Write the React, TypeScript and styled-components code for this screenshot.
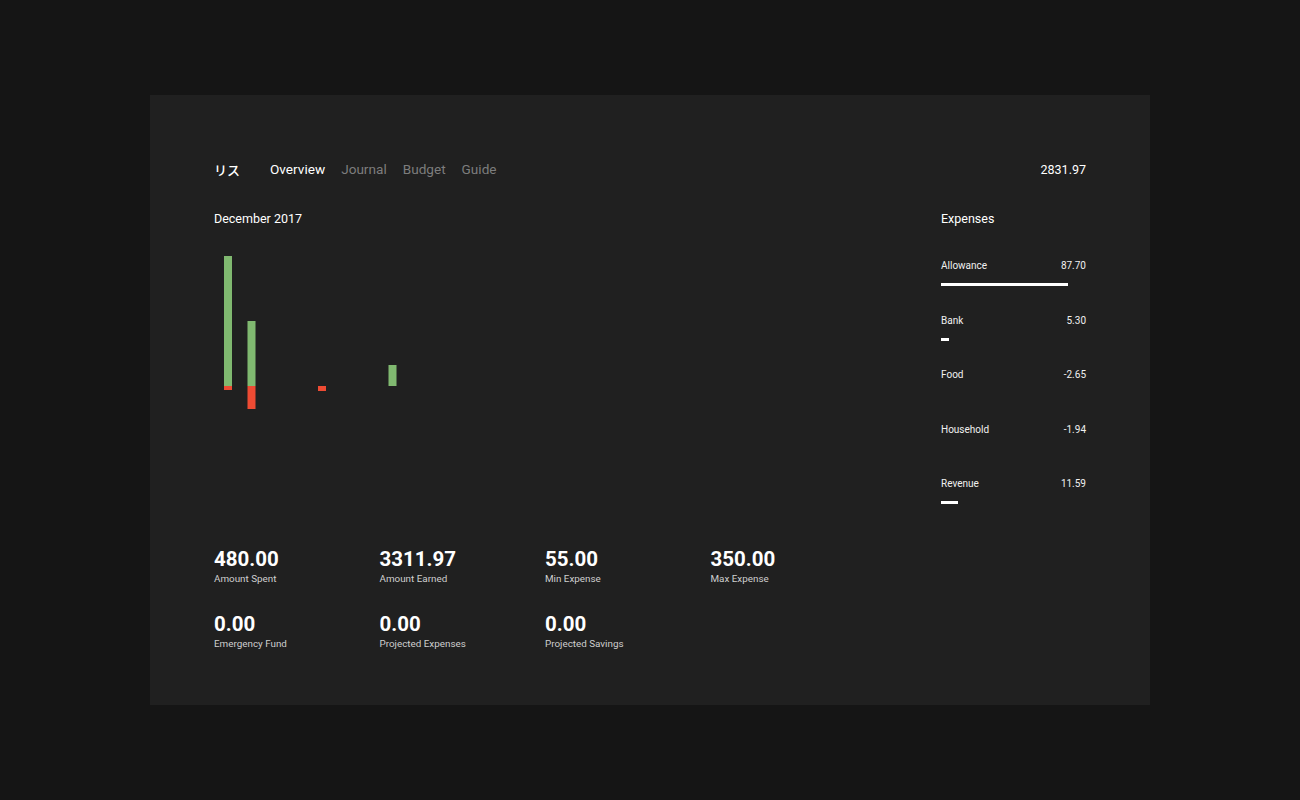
import React from "react";
import styled, { createGlobalStyle } from "styled-components";

const Global = createGlobalStyle`
  html, body { margin: 0; padding: 0; background: #151515; }
  body { font-family: Roboto, "Noto Sans CJK JP", sans-serif; color: #eee; }
`;

const Page = styled.div`
  min-height: 100vh;
  display: flex;
  align-items: center;
  justify-content: center;
`;

const Card = styled.div`
  width: 1000px;
  box-sizing: border-box;
  background: #202020;
  padding: 64px 64px 53px;
`;

const Header = styled.div`
  display: flex;
  align-items: center;
  justify-content: space-between;
  height: 20px;
`;

const Nav = styled.nav`
  display: flex;
  align-items: center;
  gap: 16px;
`;

const Logo = styled.span`
  font-family: Roboto, "Noto Sans CJK JP", sans-serif;
  font-size: 13px;
  font-weight: 500;
  color: #fff;
  margin-right: 14px;
`;

const NavLink = styled.span<{ $active?: boolean }>`
  font-size: 13.6px;
  line-height: 20px;
  color: ${(p) => (p.$active ? "#fff" : "#7d7d7d")};
`;

const Balance = styled.span`
  font-size: 12.5px;
  color: #fff;
`;

const Body = styled.div`
  display: flex;
  justify-content: space-between;
  margin-top: 32px;
`;

const Left = styled.div`
  display: flex;
  flex-direction: column;
`;

const Title = styled.div`
  font-size: 12.5px;
  line-height: 16px;
  color: #fff;
`;

const ChartSvg = styled.svg`
  display: block;
  margin-top: 14px;
`;

const StatsGrid = styled.div`
  display: grid;
  grid-template-columns: repeat(4, 165.5px);
  row-gap: 25px;
  margin-top: 16px;
`;

const Stat = styled.div`
  display: flex;
  flex-direction: column;
`;

const StatValue = styled.div`
  font-size: 20.5px;
  font-weight: 700;
  line-height: 24px;
  color: #fff;
`;

const StatLabel = styled.div`
  font-size: 9.85px;
  line-height: 16px;
  color: #cfcfcf;
`;

const Right = styled.div`
  width: 145px;
  display: flex;
  flex-direction: column;
`;

const List = styled.div`
  display: flex;
  flex-direction: column;
  margin-top: 32px;
`;

const Row = styled.div`
  display: flex;
  flex-direction: column;
  height: 54.5px;
`;

const RowHead = styled.div`
  display: flex;
  justify-content: space-between;
  font-size: 10px;
  line-height: 14px;
  color: #f0f0f0;
`;

const Track = styled.div`
  margin-top: 10px;
  height: 3px;
`;

const Fill = styled.div`
  height: 3px;
  background: #fff;
`;

const GREEN = "#80b970";
const RED = "#ee4b33";

const bars = [
  { day: 0, up: 130, down: 4 },
  { day: 1, up: 65, down: 23 },
  { day: 4, up: 0, down: 5 },
  { day: 7, up: 21, down: 0 },
];

const expenses = [
  { name: "Allowance", value: 87.7 },
  { name: "Bank", value: 5.3 },
  { name: "Food", value: -2.65 },
  { name: "Household", value: -1.94 },
  { name: "Revenue", value: 11.59 },
];

const stats = [
  { v: "480.00", l: "Amount Spent" },
  { v: "3311.97", l: "Amount Earned" },
  { v: "55.00", l: "Min Expense" },
  { v: "350.00", l: "Max Expense" },
  { v: "0.00", l: "Emergency Fund" },
  { v: "0.00", l: "Projected Expenses" },
  { v: "0.00", l: "Projected Savings" },
];

const BASE = 145;

export default function App() {
  return (
    <>
      <Global />
      <Page>
        <Card>
          <Header>
            <Nav>
              <Logo>リス</Logo>
              <NavLink $active>Overview</NavLink>
              <NavLink>Journal</NavLink>
              <NavLink>Budget</NavLink>
              <NavLink>Guide</NavLink>
            </Nav>
            <Balance>2831.97</Balance>
          </Header>
          <Body>
            <Left>
              <Title>December 2017</Title>
              <ChartSvg width="662" height="290" viewBox="0 0 662 290">
                {bars.map((b) => {
                  const x = 10 + b.day * 23.5;
                  return (
                    <g key={b.day}>
                      {b.up > 0 && (
                        <rect x={x} y={BASE - b.up} width={8} height={b.up} fill={GREEN} />
                      )}
                      {b.down > 0 && (
                        <rect x={x} y={BASE} width={8} height={b.down} fill={RED} />
                      )}
                    </g>
                  );
                })}
              </ChartSvg>
              <StatsGrid>
                {stats.map((s) => (
                  <Stat key={s.l}>
                    <StatValue>{s.v}</StatValue>
                    <StatLabel>{s.l}</StatLabel>
                  </Stat>
                ))}
              </StatsGrid>
            </Left>
            <Right>
              <Title>Expenses</Title>
              <List>
                {expenses.map((e) => (
                  <Row key={e.name}>
                    <RowHead>
                      <span>{e.name}</span>
                      <span>{e.value.toFixed(2)}</span>
                    </RowHead>
                    <Track>
                      <Fill style={{ width: `${Math.max(0, e.value)}%` }} />
                    </Track>
                  </Row>
                ))}
              </List>
            </Right>
          </Body>
        </Card>
      </Page>
    </>
  );
}
